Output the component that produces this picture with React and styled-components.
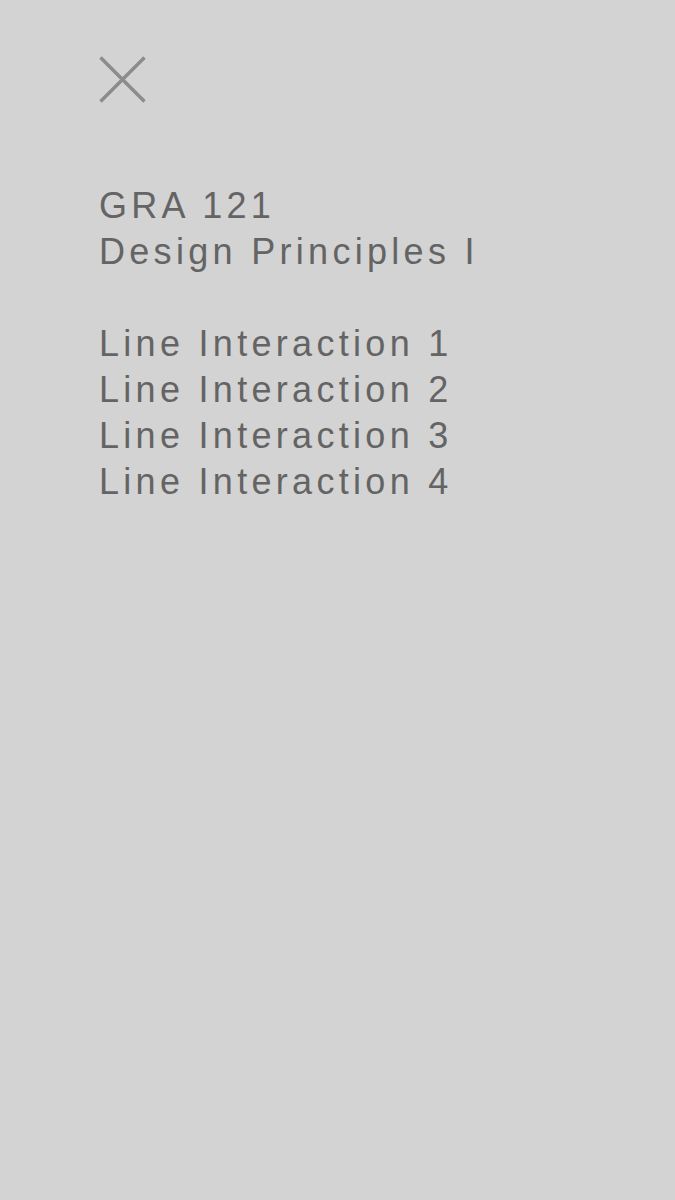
import React from "react";
import styled, { createGlobalStyle } from "styled-components";

const Global = createGlobalStyle`
  html, body { margin: 0; padding: 0; background: #d3d3d3; }
  body { font-family: "Liberation Sans", Arial, sans-serif; }
`;

const Page = styled.div`
  min-height: 1200px;
  background: #d3d3d3;
  padding: 56px 0 0 99px;
  box-sizing: border-box;
`;

const CloseButton = styled.button`
  display: block;
  width: 48px;
  height: 48px;
  padding: 0;
  border: none;
  background: transparent;
  cursor: pointer;
`;

const Menu = styled.nav`
  margin-top: 79px;
  display: flex;
  flex-direction: column;
`;

const Line = styled.a`
  display: block;
  font-size: 36px;
  line-height: 46px;
  letter-spacing: 4.3px;
  color: #646464;
  text-decoration: none;
  margin-top: ${(p) => (p.$gap ? "46px" : "0")};
`;

export default function App() {
  return (
    <>
      <Global />
      <Page>
        <CloseButton aria-label="Close">
          <svg width="48" height="48" viewBox="0 0 48 48">
            <path d="M1.5 1.5 L45.5 45.5 M45.5 1.5 L1.5 45.5" stroke="#8c8c8c" strokeWidth="3.5" fill="none" />
          </svg>
        </CloseButton>
        <Menu>
          <Line>GRA 121</Line>
          <Line>Design Principles I</Line>
          <Line $gap>Line Interaction 1</Line>
          <Line>Line Interaction 2</Line>
          <Line>Line Interaction 3</Line>
          <Line>Line Interaction 4</Line>
        </Menu>
      </Page>
    </>
  );
}
